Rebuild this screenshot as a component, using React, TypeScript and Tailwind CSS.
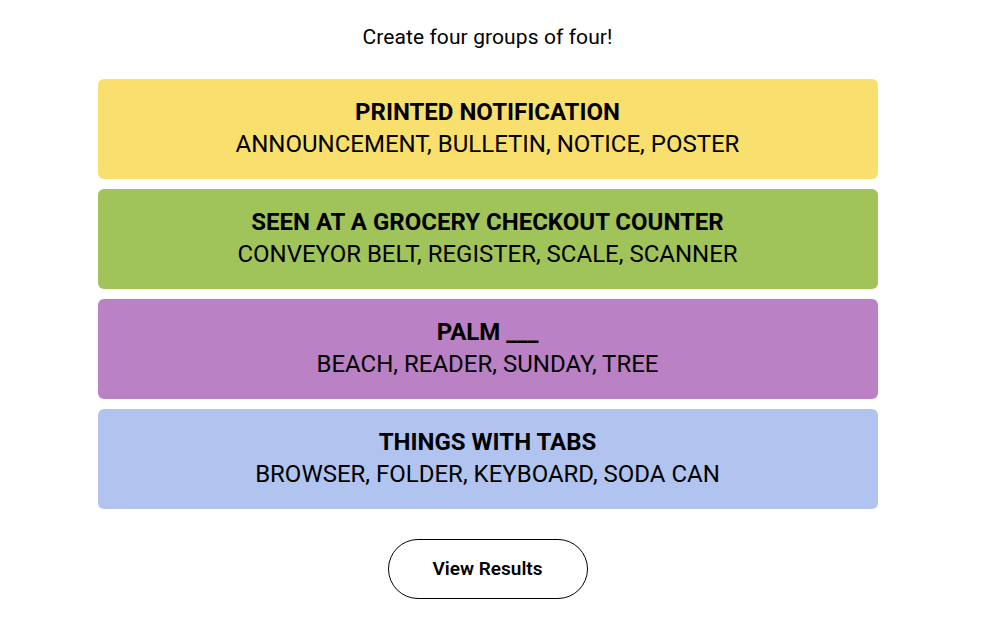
const groups = [
  { title: "PRINTED NOTIFICATION", words: "ANNOUNCEMENT, BULLETIN, NOTICE, POSTER", color: "bg-[#f9df6d]" },
  { title: "SEEN AT A GROCERY CHECKOUT COUNTER", words: "CONVEYOR BELT, REGISTER, SCALE, SCANNER", color: "bg-[#a0c35a]" },
  { title: "PALM ___", words: "BEACH, READER, SUNDAY, TREE", color: "bg-[#ba81c5]" },
  { title: "THINGS WITH TABS", words: "BROWSER, FOLDER, KEYBOARD, SODA CAN", color: "bg-[#b0c4ef]" },
];

export default function App() {
  return (
    <div className="flex flex-col items-center w-full min-h-screen pr-[6px] bg-white text-black font-['Roboto',sans-serif]">
      <p className="mt-[24px] text-[21px] leading-[26px] tracking-[0.1px]">Create four groups of four!</p>

      <div className="flex flex-col gap-[10px] w-[780px] mt-[29px]">
        {groups.map((g) => (
          <div
            key={g.title}
            className={`flex flex-col items-center justify-center h-[100px] pb-[2px] rounded-md ${g.color}`}
          >
            <p className="font-bold text-[24px] leading-[32px]">{g.title}</p>
            <p className="text-[24px] leading-[32px]">{g.words}</p>
          </div>
        ))}
      </div>

      <button className="mt-[30px] w-[200px] h-[60px] rounded-full border border-black font-semibold text-[19px]">
        View Results
      </button>
    </div>
  );
}
